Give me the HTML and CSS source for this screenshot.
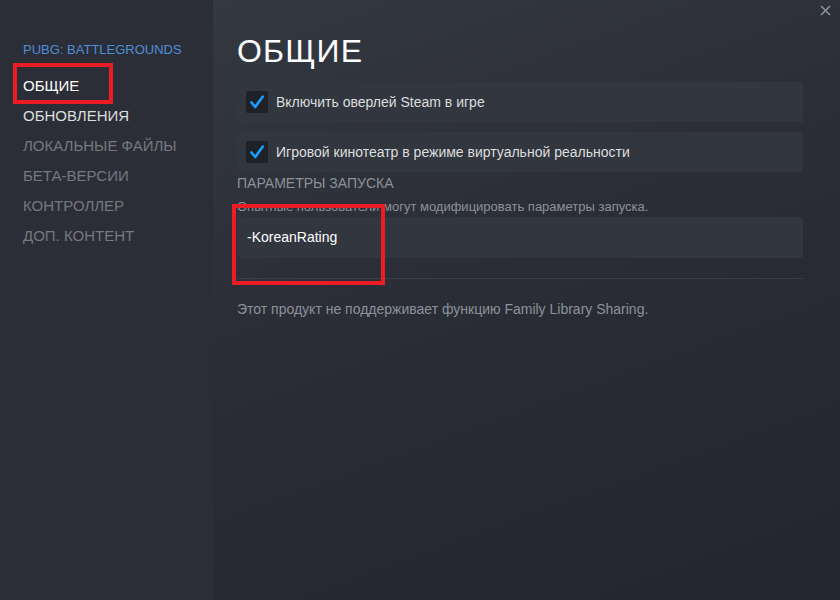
FILE: index.html
```html
<!DOCTYPE html>
<html lang="ru">
<head>
    <meta charset="UTF-8">
    <title>Свойства: PUBG: BATTLEGROUNDS</title>
    <link rel="stylesheet" href="styles.css">
</head>
<body>
    <div class="window">
        <aside class="sidebar">
            <div class="game-title">PUBG: BATTLEGROUNDS</div>
            <nav class="nav">
                <div class="nav-item active">ОБЩИЕ</div>
                <div class="nav-item light">ОБНОВЛЕНИЯ</div>
                <div class="nav-item">ЛОКАЛЬНЫЕ ФАЙЛЫ</div>
                <div class="nav-item">БЕТА-ВЕРСИИ</div>
                <div class="nav-item">КОНТРОЛЛЕР</div>
                <div class="nav-item">ДОП. КОНТЕНТ</div>
            </nav>
            <div class="mark mark-nav"></div>
        </aside>

        <main class="content">
            <button class="close" title="Закрыть">
                <svg width="11" height="11" viewBox="0 0 11 11"><path d="M1 1L10 10M10 1L1 10" stroke="#8b929a" stroke-width="1.6"/></svg>
            </button>

            <h1 class="heading">ОБЩИЕ</h1>

            <div class="option">
                <span class="checkbox">
                    <svg width="16" height="16" viewBox="0 0 16 16"><path d="M2.5 8.5L6.2 13L13.8 2.5" fill="none" stroke="#1a9fff" stroke-width="2.6" stroke-linecap="round" stroke-linejoin="round"/></svg>
                </span>
                <span>Включить оверлей Steam в игре</span>
            </div>

            <div class="option">
                <span class="checkbox">
                    <svg width="16" height="16" viewBox="0 0 16 16"><path d="M2.5 8.5L6.2 13L13.8 2.5" fill="none" stroke="#1a9fff" stroke-width="2.6" stroke-linecap="round" stroke-linejoin="round"/></svg>
                </span>
                <span>Игровой кинотеатр в режиме виртуальной реальности</span>
            </div>

            <div class="launch">
                <div class="section-title">ПАРАМЕТРЫ ЗАПУСКА</div>
                <div class="hint">Опытные пользователи могут модифицировать параметры запуска.</div>
                <div class="field">-KoreanRating</div>
                <div class="mark mark-field"></div>
            </div>

            <div class="divider"></div>

            <p class="note">Этот продукт не поддерживает функцию Family Library Sharing.</p>
        </main>
    </div>
</body>
</html>
```

FILE: styles.css
```css
html, body {
    margin: 0;
    height: 100%;
}
body {
    font-family: Arial, "Liberation Sans", sans-serif;
    background: #252830;
    color: #dcdedf;
}
.window {
    display: flex;
    height: 600px;
}
.sidebar {
    position: relative;
    width: 213px;
    flex-shrink: 0;
    background: #2b2e36;
    padding: 42px 0 0 23px;
    box-sizing: border-box;
}
.game-title {
    color: #4e8fd6;
    font-size: 13px;
    line-height: 16px;
    margin-bottom: 13px;
}
.nav-item {
    font-size: 15px;
    line-height: 30px;
    color: #757980;
}
.nav-item.active {
    color: #ffffff;
}
.nav-item.light {
    color: #dcdedf;
}
.content {
    position: relative;
    flex: 1;
    padding: 33px 37px 0 24px;
    background: linear-gradient(160deg, #343841 0%, #2a2d35 45%, #23262e 100%);
}
.close {
    position: absolute;
    top: 4px;
    right: 9px;
    padding: 0;
    border: none;
    background: none;
    cursor: pointer;
}
.heading {
    margin: 0 0 13px;
    font-size: 32px;
    line-height: 36px;
    font-weight: normal;
    letter-spacing: 1.2px;
    color: #ffffff;
}
.option {
    display: flex;
    align-items: center;
    gap: 8px;
    height: 40px;
    padding: 0 9px;
    border-radius: 3px;
    background: #32363e;
    font-size: 14px;
    color: #dcdedf;
}
.option + .option {
    margin-top: 10px;
}
.checkbox {
    display: flex;
    align-items: center;
    justify-content: center;
    width: 22px;
    height: 22px;
    border-radius: 2px;
    background: #1e2127;
}
.launch {
    position: relative;
}
.section-title {
    margin-top: 3px;
    font-size: 14px;
    line-height: 16px;
    color: #8b929a;
}
.hint {
    margin-top: 8px;
    font-size: 13px;
    line-height: 16px;
    color: #8b929a;
}
.field {
    height: 41px;
    margin-top: 2px;
    padding: 0 10px;
    border-radius: 3px;
    background: #32363e;
    font-size: 14px;
    line-height: 41px;
    color: #ffffff;
}
.divider {
    height: 1px;
    margin-top: 20px;
    background: #3a3e46;
}
.note {
    margin: 22px 0 0;
    font-size: 14px;
    line-height: 16px;
    color: #8b929a;
}

/* red annotation frames drawn over the screenshot */
.mark {
    position: absolute;
    border: 4px solid #ec1c24;
    box-sizing: border-box;
}
.mark-nav {
    left: 13px;
    top: 63px;
    width: 100px;
    height: 41px;
}
.mark-field {
    left: -5px;
    top: 29px;
    width: 153px;
    height: 81px;
}
```
